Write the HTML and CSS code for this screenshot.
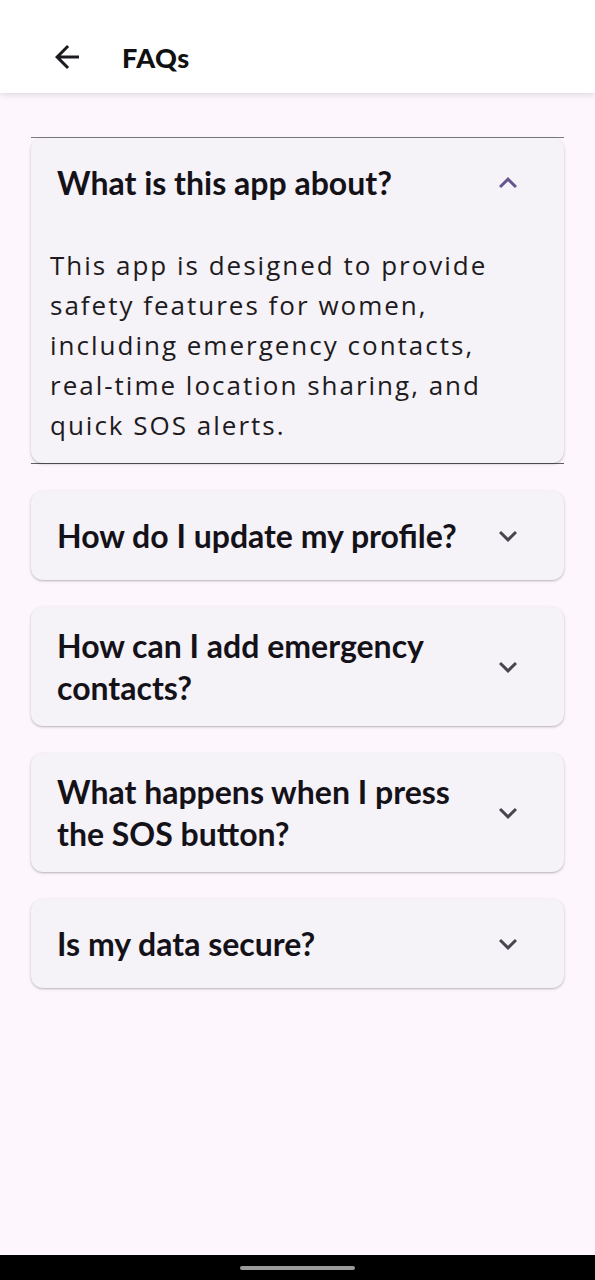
FILE: index.html
```html
<!DOCTYPE html>
<html lang="en">
<head>
<meta charset="utf-8">
<title>FAQs</title>
<link rel="stylesheet" href="styles.css">
</head>
<body>
<header class="appbar">
  <button class="back" aria-label="Back">
    <svg viewBox="0 0 24 24" width="36" height="36"><path d="M20 11H7.83l5.59-5.59L12 4l-8 8 8 8 1.41-1.41L7.83 13H20v-2z" fill="#1d1b20"/></svg>
  </button>
  <h1 class="title">FAQs</h1>
</header>
<main class="content">
  <div class="item expanded">
    <div class="card">
      <div class="q">
        <span class="qtext">What is this app about?</span>
        <span class="chev up"><svg viewBox="0 0 24 24" width="36" height="36"><path d="M7.41 15.41 12 10.83l4.59 4.58L18 14l-6-6-6 6z" fill="#65558f"/></svg></span>
      </div>
      <p class="a">This app is designed to provide safety features for women, including emergency contacts, real-time location sharing, and quick SOS alerts.</p>
    </div>
  </div>
  <div class="item">
    <div class="card">
      <div class="q">
        <span class="qtext">How do I update my profile?</span>
        <span class="chev"><svg viewBox="0 0 24 24" width="36" height="36"><path d="M7.41 8.59 12 13.17l4.59-4.58L18 10l-6 6-6-6z" fill="#49454f"/></svg></span>
      </div>
    </div>
  </div>
  <div class="item">
    <div class="card">
      <div class="q">
        <span class="qtext">How can I add emergency contacts?</span>
        <span class="chev"><svg viewBox="0 0 24 24" width="36" height="36"><path d="M7.41 8.59 12 13.17l4.59-4.58L18 10l-6 6-6-6z" fill="#49454f"/></svg></span>
      </div>
    </div>
  </div>
  <div class="item">
    <div class="card">
      <div class="q">
        <span class="qtext">What happens when I press the SOS button?</span>
        <span class="chev"><svg viewBox="0 0 24 24" width="36" height="36"><path d="M7.41 8.59 12 13.17l4.59-4.58L18 10l-6 6-6-6z" fill="#49454f"/></svg></span>
      </div>
    </div>
  </div>
  <div class="item">
    <div class="card">
      <div class="q">
        <span class="qtext">Is my data secure?</span>
        <span class="chev"><svg viewBox="0 0 24 24" width="36" height="36"><path d="M7.41 8.59 12 13.17l4.59-4.58L18 10l-6 6-6-6z" fill="#49454f"/></svg></span>
      </div>
    </div>
  </div>
</main>
<div class="navbar"><span class="pill"></span></div>
</body>
</html>
```
FILE: styles.css
```css
* { box-sizing: border-box; }
html, body { margin: 0; padding: 0; }
body {
  width: 595px;
  height: 1280px;
  display: flex;
  flex-direction: column;
  background: #fdf7fd;
  font-family: Lato, "Noto Sans", sans-serif;
  color: #1d1b20;
  overflow: hidden;
}
.appbar {
  height: 93px;
  flex: none;
  background: #ffffff;
  display: flex;
  align-items: center;
  padding: 21px 0 0 49px;
  gap: 37px;
  box-shadow: 0 2px 6px rgba(0,0,0,0.12);
  position: relative;
  z-index: 1;
}
.back {
  width: 36px;
  height: 36px;
  padding: 0;
  border: 0;
  background: none;
  display: flex;
}
.title {
  margin: 0;
  font-family: Lato, sans-serif;
  font-weight: 900;
  font-size: 27px;
  letter-spacing: 0.5px;
  color: #111;
}
.content {
  flex: 1;
  padding: 44px 31px 0;
  display: flex;
  flex-direction: column;
  gap: 27px;
}
.item.expanded {
  border-top: 1px solid #7d7a80;
  border-bottom: 1px solid #5f5c63;
}
.card {
  background: #f5f2f8;
  border-radius: 12px;
  box-shadow: 0 1px 3px rgba(0,0,0,0.22), 0 1px 1px rgba(0,0,0,0.08);
}
.q {
  min-height: 89px;
  display: flex;
  align-items: center;
  padding: 17.5px 38px 17.5px 26px;
  gap: 24px;
}
.qtext {
  flex: 1;
  font-family: Lato, sans-serif;
  font-weight: 700;
  font-size: 32px;
  line-height: 42px;
  color: #141218;
}
.chev {
  width: 36px;
  height: 36px;
  flex: none;
  display: flex;
}
.a {
  margin: 0;
  padding: 18px 19px 18px;
  font-family: "Open Sans", sans-serif;
  font-size: 26px;
  line-height: 40px;
  letter-spacing: 2px;
  color: #1d1b20;
}
.navbar {
  height: 25px;
  flex: none;
  background: #000;
  display: flex;
  justify-content: center;
  align-items: center;
}
.pill {
  width: 115px;
  height: 4px;
  border-radius: 2px;
  background: #9a9a9a;
}
```
